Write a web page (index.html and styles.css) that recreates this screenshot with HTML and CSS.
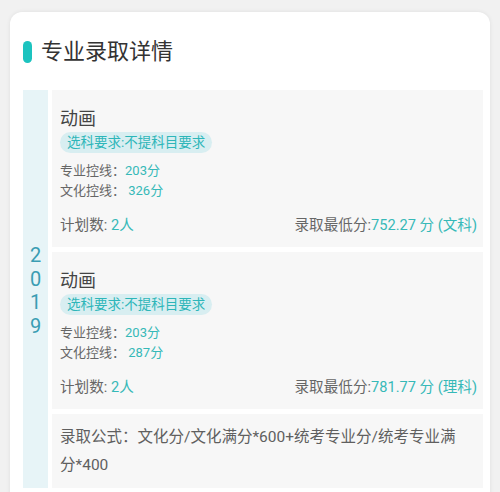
FILE: index.html
```html
<!DOCTYPE html>
<html lang="zh">
<head>
<meta charset="utf-8">
<link rel="stylesheet" href="styles.css">
</head>
<body>
<div class="card">
  <div class="title"><span class="bar"></span><span class="title-text">专业录取详情</span></div>
  <div class="rows">
    <div class="year"><span>2</span><span>0</span><span>1</span><span>9</span></div>
    <div class="items">
      <div class="item">
        <div class="name">动画</div>
        <div class="tag-row"><span class="tag">选科要求:不提科目要求</span></div>
        <div class="lines">
          <div class="line">专业控线：<span class="hl">203分</span></div>
          <div class="line">文化控线： <span class="hl">326分</span></div>
        </div>
        <div class="foot">
          <span>计划数: <span class="hl">2人</span></span>
          <span>录取最低分:<span class="hl">752.27 分 (文科)</span></span>
        </div>
      </div>
      <div class="item">
        <div class="name">动画</div>
        <div class="tag-row"><span class="tag">选科要求:不提科目要求</span></div>
        <div class="lines">
          <div class="line">专业控线：<span class="hl">203分</span></div>
          <div class="line">文化控线： <span class="hl">287分</span></div>
        </div>
        <div class="foot">
          <span>计划数: <span class="hl">2人</span></span>
          <span>录取最低分:<span class="hl">781.77 分 (理科)</span></span>
        </div>
      </div>
      <div class="item formula">录取公式：文化分/文化满分*600+统考专业分/统考专业满分*400</div>
    </div>
  </div>
</div>
</body>
</html>
```
FILE: styles.css
```css
html, body {
  margin: 0;
  padding: 0;
}
body {
  background: #f1f1f1;
  font-family: Roboto, "Noto Sans CJK SC", sans-serif;
  color: #666;
  padding: 12px 10px 0 10px;
  height: 492px;
  box-sizing: border-box;
  overflow: hidden;
}
.card {
  background: #fff;
  border-radius: 12px 12px 0 0;
  box-shadow: 0 0 4px rgba(0,0,0,0.08);
  padding: 25px 7px 20px 13px;
}
.title {
  display: flex;
  align-items: center;
  height: 30px;
}
.bar {
  width: 9px;
  height: 22px;
  border-radius: 5px;
  background: #1cc3bf;
  margin-right: 9px;
}
.title-text {
  font-size: 22px;
  line-height: 30px;
  color: #333;
}
.rows {
  display: flex;
  gap: 4px;
  margin-top: 23px;
}
.year {
  width: 25px;
  background: #e7f4f7;
  display: flex;
  flex-direction: column;
  justify-content: center;
  align-items: center;
  color: #3a9db3;
  font-size: 20px;
  line-height: 23.5px;
  padding-top: 4px;
}
.items {
  flex: 1;
  display: flex;
  flex-direction: column;
  gap: 5px;
}
.item {
  background: #f7f7f7;
  padding: 17px 6px 12px 8px;
}
.name {
  font-size: 18px;
  line-height: 24px;
  color: #444;
}
.tag-row {
  margin-top: 1px;
  display: flex;
}
.tag {
  background: #d8eef1;
  color: #2eb6b9;
  font-size: 13.5px;
  line-height: 21px;
  padding: 0 7px;
  border-radius: 11px;
}
.lines {
  margin-top: 8px;
}
.line {
  font-size: 13px;
  line-height: 20px;
}
.hl {
  color: #36b9b8;
}
.foot {
  margin-top: 14px;
  display: flex;
  justify-content: space-between;
  font-size: 14.6px;
  line-height: 20px;
}
.formula {
  padding: 9px 18px 9px 8px;
  font-size: 15.5px;
  line-height: 28px;
  color: #5f5f5f;
}
```
